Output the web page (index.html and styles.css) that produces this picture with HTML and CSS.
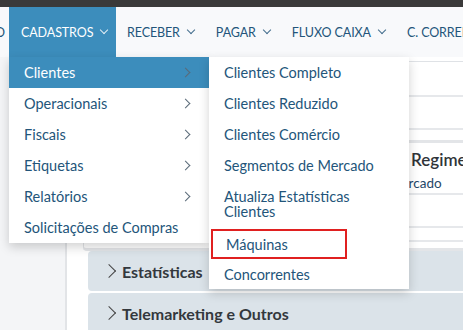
FILE: index.html
```html
<!DOCTYPE html>
<html lang="pt-BR">
<head>
    <meta charset="UTF-8">
    <meta name="viewport" content="width=device-width, initial-scale=1.0">
    <title>Cadastros</title>
    <link rel="stylesheet" href="styles.css">
</head>
<body>
    <div class="topo"></div>
    <nav class="navbar">
        <span class="nav-item corte">O</span>
        <div class="nav-wrap">
            <span class="nav-item ativo">CADASTROS <i class="seta-baixo"></i></span>

            <ul class="menu menu-1">
                <li class="sel">Clientes <i class="seta-dir"></i></li>
                <li>Operacionais <i class="seta-dir"></i></li>
                <li>Fiscais <i class="seta-dir"></i></li>
                <li>Etiquetas <i class="seta-dir"></i></li>
                <li>Relatórios <i class="seta-dir"></i></li>
                <li>Solicitações de Compras</li>
            </ul>

            <ul class="menu menu-2">
                <li>Clientes Completo</li>
                <li>Clientes Reduzido</li>
                <li>Clientes Comércio</li>
                <li>Segmentos de Mercado</li>
                <li class="duas">Atualiza Estatísticas Clientes</li>
                <li class="marcado">Máquinas</li>
                <li class="ultimo">Concorrentes</li>
            </ul>
        </div>
        <span class="nav-item">RECEBER <i class="seta-baixo"></i></span>
        <span class="nav-item">PAGAR <i class="seta-baixo"></i></span>
        <span class="nav-item">FLUXO CAIXA <i class="seta-baixo"></i></span>
        <span class="nav-item">C. CORRENTE <i class="seta-baixo"></i></span>
    </nav>

    <main class="conteudo">
        <aside class="lateral"></aside>
        <section class="area">
            <div class="cartao">
                <div class="linha l1"></div>
                <div class="linha l2"></div>
                <div class="linha curta"></div>
                <div class="linha alta">
                    <h3>Regime Tributário</h3>
                    <p>Segmento de Mercado</p>
                </div>
                <div class="linha l2"></div>
                <div class="linha baixa"></div>
            </div>
            <div class="painel"><i class="seta-dir escura"></i> Estatísticas</div>
            <div class="painel"><i class="seta-dir escura"></i> Telemarketing e Outros</div>
        </section>
    </main>
</body>
</html>
```

FILE: styles.css
```css
* {
    padding: 0px;
    margin: 0px;
    box-sizing: border-box;
    font-family: Lato, "Open Sans", sans-serif;
}
:root {
    --azul: #3c8dbc;
    --texto: #23557a;
    --fundo: #f4f5f7;
    --painel: #dbe3e9;
}
body {
    width: 463px;
    height: 330px;
    overflow: hidden;
    background-color: var(--fundo);
}
.topo {
    height: 7px;
    background-color: #3a3a3a;
}
.navbar {
    height: 50px;
    display: flex;
    align-items: stretch;
    background-color: #f8f9fb;
    white-space: nowrap;
    position: relative;
    z-index: 5;
}
.nav-item {
    flex-shrink: 0;
    display: flex;
    align-items: center;
    gap: 6px;
    padding: 0px 11px;
    font-size: 12.5px;
    color: var(--texto);
    letter-spacing: -0.1px;
}
.nav-item.corte {
    width: 9px;
    padding: 0px 4px 0px 0px;
    overflow: hidden;
    justify-content: flex-end;
}
.nav-wrap {
    flex-shrink: 0;
    position: relative;
    display: flex;
}
.nav-item.ativo {
    background-color: var(--azul);
    color: #fff;
    width: 107px;
    padding-left: 12px;
}
.seta-baixo {
    flex-shrink: 0;
    width: 6px;
    height: 6px;
    border-right: 1.3px solid currentColor;
    border-bottom: 1.3px solid currentColor;
    transform: rotate(45deg);
    margin-top: -4px;
    margin-left: 2px;
    opacity: 0.85;
}
.seta-dir {
    flex-shrink: 0;
    width: 7px;
    height: 7px;
    border-right: 1.2px solid #5a6a78;
    border-top: 1.2px solid #5a6a78;
    transform: rotate(45deg);
}
.menu {
    position: absolute;
    top: 50px;
    list-style: none;
    background-color: #fff;
    width: 200px;
    box-shadow: 0px 4px 10px rgba(0, 0, 0, 0.18);
}
.menu-1 {
    left: 0px;
}
.menu-2 {
    left: 200px;
}
.menu li {
    height: 31px;
    display: flex;
    align-items: center;
    justify-content: space-between;
    padding: 0px 15px;
    font-size: 14.5px;
    color: var(--texto);
}
.menu-1 li .seta-dir {
    margin-right: 5px;
}
.menu li.sel {
    background-color: var(--azul);
    color: #fff;
}
.menu li.duas {
    height: 46px;
    white-space: normal;
    line-height: 15px;
    padding-right: 40px;
    align-items: flex-start;
    padding-top: 8px;
}
.menu li.marcado {
    margin: 2px 0px 0px 2px;
    padding-left: 13px;
    height: 30px;
    width: 136px;
    border: 2px solid #e02020;
}
.menu li.ultimo {
    height: 30px;
}
.conteudo {
    display: flex;
    height: 273px;
}
.lateral {
    flex-shrink: 0;
    width: 67px;
    border-right: 2px solid #e2e4e7;
    background-color: var(--fundo);
}
.area {
    flex: 1;
    min-width: 0;
    overflow: hidden;
    background-color: #fff;
    padding: 4px 0px 0px 16px;
}
.cartao {
    border-left: 1px solid #e3e5e8;
    padding: 0px 0px 6px 4px;
    border-top: 1px solid #dfe2e6;
    border-bottom: 3px solid #e3e5e8;
    border-bottom-left-radius: 4px;
}
.linha {
    border-bottom: 2px solid #e6e8eb;
}
.linha.l1 {
    height: 35px;
}
.linha.l2 {
    height: 33px;
}
.linha.curta {
    height: 13px;
    border-bottom: 3px solid #e3e5e8;
}
.linha.alta {
    height: 52px;
    padding: 6px 0px 0px 286px;
}
.linha.alta h3 {
    font-size: 17px;
    font-weight: 600;
    color: #2f3439;
    white-space: nowrap;
    margin-left: 37px;
}
.linha.alta p {
    font-size: 13.5px;
    color: #1f4767;
    white-space: nowrap;
    margin-top: 5px;
    margin-left: -66px;
}
.linha.baixa {
    height: 14px;
}
.painel {
    margin: 0px 0px 2px 5px;
    height: 40px;
    background-color: var(--painel);
    border-top-left-radius: 4px;
    border-bottom-left-radius: 4px;
    display: flex;
    align-items: center;
    gap: 6px;
    padding-left: 16px;
    font-size: 16px;
    font-weight: 700;
    color: #33383d;
}
.seta-dir.escura {
    border-color: #444;
    width: 10px;
    height: 10px;
    border-width: 1.2px;
    margin-right: 2px;
}
```
